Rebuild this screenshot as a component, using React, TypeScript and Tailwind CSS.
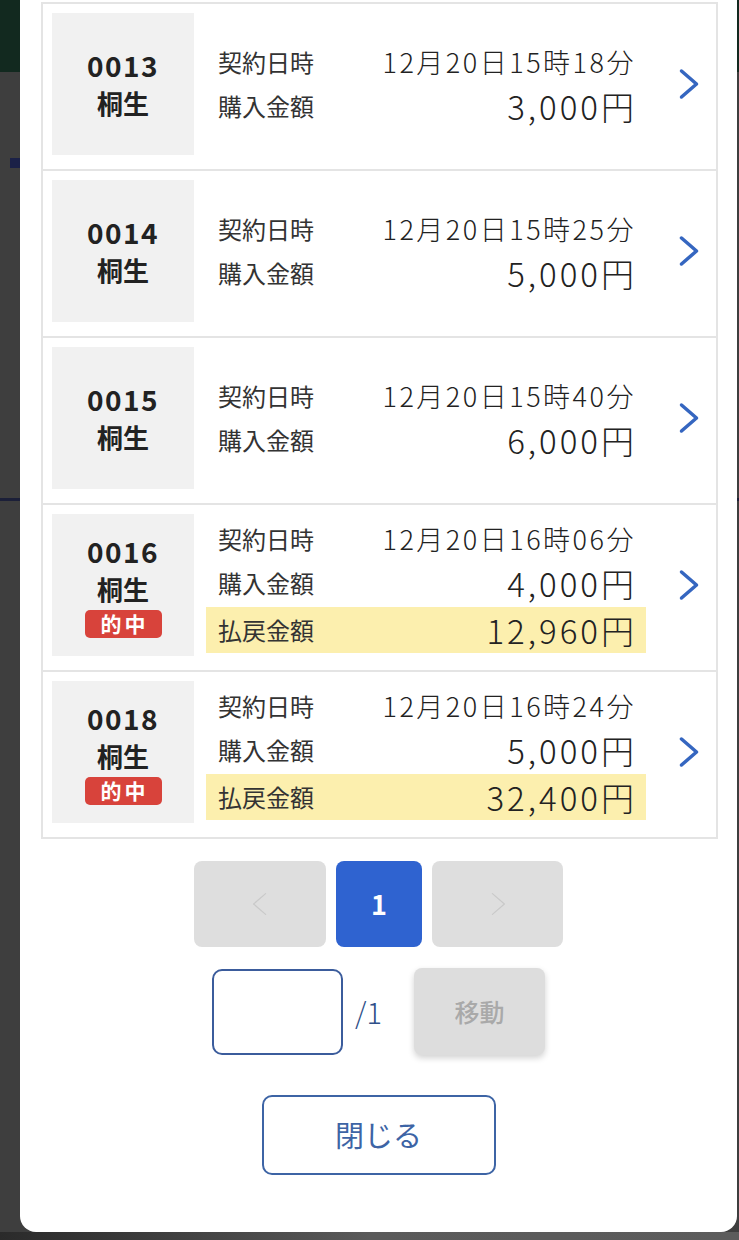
const font = { fontFamily: '"Noto Sans CJK JP", "Noto Sans", sans-serif' };

type Ticket = {
  no: string;
  place: string;
  date: string;
  amount: string;
  payout?: string;
};

const tickets: Ticket[] = [
  { no: "0013", place: "桐生", date: "12月20日15時18分", amount: "3,000円" },
  { no: "0014", place: "桐生", date: "12月20日15時25分", amount: "5,000円" },
  { no: "0015", place: "桐生", date: "12月20日15時40分", amount: "6,000円" },
  { no: "0016", place: "桐生", date: "12月20日16時06分", amount: "4,000円", payout: "12,960円" },
  { no: "0018", place: "桐生", date: "12月20日16時24分", amount: "5,000円", payout: "32,400円" },
];

function Chevron({ className, dir = "right" }: { className?: string; dir?: "left" | "right" }) {
  return (
    <svg viewBox="0 0 20 32" className={className} fill="none" stroke="currentColor" strokeLinecap="round" strokeLinejoin="round">
      {dir === "right" ? <polyline points="3,3 18,16 3,29" /> : <polyline points="17,3 2,16 17,29" />}
    </svg>
  );
}

function TicketCard({ t, last }: { t: Ticket; last: boolean }) {
  return (
    <div
      className={`flex h-[167px] items-start border-t-2 border-[#e4e4e4] pl-[9px] pt-[9px] ${last ? "h-[169px] border-b-2" : ""}`}
    >
      <div className="flex h-[142px] w-[142px] flex-col items-center justify-center bg-[#f1f1f1] text-[#222]">
        <div className="text-[28px] font-semibold leading-[38px] tracking-[1.5px]">{t.no}</div>
        <div className="text-[26px] font-bold leading-[38px]">{t.place}</div>
        {t.payout && (
          <div className="mt-[2px] flex h-[28px] w-[77px] items-center justify-center rounded-[5px] bg-[#d8433b] pl-[3px] text-[21px] font-bold tracking-[3px] text-white">
            的中
          </div>
        )}
      </div>
      <div className="ml-[12px] flex h-[142px] w-[440px] flex-col justify-center text-[#333]">
        <div className="flex h-[44px] items-center justify-between px-3">
          <span className="text-[24px]">契約日時</span>
          <span className="mr-[-2px] text-[27px] font-light tracking-[2.5px] text-[#222]">{t.date}</span>
        </div>
        <div className="flex h-[44px] items-center justify-between px-3">
          <span className="text-[24px]">購入金額</span>
          <span className="mr-[-3px] text-[33px] font-light leading-none tracking-[3px] text-[#222]">{t.amount}</span>
        </div>
        {t.payout && (
          <div className="mt-[2px] flex h-[46px] items-center justify-between bg-[#fcefae] px-3">
            <span className="text-[24px]">払戻金額</span>
            <span className="mr-[-3px] text-[33px] font-light leading-none tracking-[3px] text-[#222]">{t.payout}</span>
          </div>
        )}
      </div>
      <div className="flex h-[142px] flex-1 items-center justify-center pl-[14px]">
        <Chevron className="h-[32px] w-[21px] stroke-[3.5] text-[#3566c0]" />
      </div>
    </div>
  );
}

export default function App() {
  return (
    <div className="relative h-[1240px] w-[739px] overflow-hidden bg-[#3e3e3e]" style={font}>
      <div className="h-[72px] w-full bg-[#12291f]" />
      <div className="ml-[10px] mt-[86px] h-[10px] w-[10px] bg-[#1b2147]" />
      <div className="mt-[330px] h-[3px] w-full bg-[#1b1f38]" />
      <div className="absolute bottom-0 left-0 h-[8px] w-full bg-gradient-to-r from-[#2a2a2a] via-[#5a5a5a] to-[#5c5c5c]" />

      <div className="absolute left-[20px] top-0 flex h-[1232px] w-[717px] flex-col items-center rounded-b-[16px] bg-white pt-[2px]">
        <div className="ml-[21px] w-[677px] self-start border-x-2 border-[#e4e4e4]">
          {tickets.map((t, i) => (
            <TicketCard key={t.no} t={t} last={i === tickets.length - 1} />
          ))}
        </div>

        <div className="mt-[22px] flex items-center gap-[10px]">
          <div className="flex h-[86px] w-[132px] items-center justify-center rounded-[8px] bg-[#dedede]">
            <Chevron dir="left" className="h-[26px] w-[16px] stroke-[1.5] text-[#c9c9c9]" />
          </div>
          <div className="flex h-[86px] w-[86px] items-center justify-center rounded-[8px] bg-[#2f63d0] text-[27px] font-bold text-white">
            1
          </div>
          <div className="flex h-[86px] w-[131px] items-center justify-center rounded-[8px] bg-[#dedede]">
            <Chevron className="h-[26px] w-[16px] stroke-[1.5] text-[#c9c9c9]" />
          </div>
        </div>

        <div className="mt-[21px] flex items-center">
          <div className="h-[86px] w-[131px] rounded-[10px] border-2 border-[#3b5c9c] bg-white" />
          <span className="ml-[12px] text-[29px] font-light text-[#2f4f88]">/1</span>
          <div className="ml-[32px] flex h-[87px] w-[131px] items-center justify-center rounded-[8px] bg-[#dddddd] text-[25px] font-medium text-[#a9a9a9] shadow-[0_3px_6px_rgba(0,0,0,0.18)]">
            移動
          </div>
        </div>

        <div className="mt-[40px] flex h-[80px] w-[234px] items-center justify-center rounded-[10px] border-2 border-[#3d64a5] text-[29px] text-[#3d64a5]">
          閉じる
        </div>
      </div>
    </div>
  );
}
